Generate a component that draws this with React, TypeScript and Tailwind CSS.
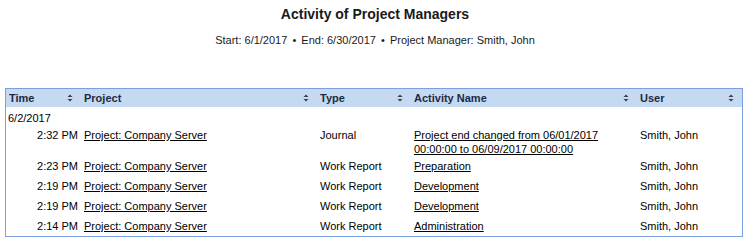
import type { ReactNode } from 'react';

interface Activity {
  time: string;
  project: string;
  type: string;
  activity: ReactNode;
  user: string;
}

const rows: Activity[] = [
  {
    time: '2:32 PM',
    project: 'Project: Company Server',
    type: 'Journal',
    activity: (
      <>
        Project end changed from 06/01/2017
        <br />
        00:00:00 to 06/09/2017 00:00:00
      </>
    ),
    user: 'Smith, John',
  },
  { time: '2:23 PM', project: 'Project: Company Server', type: 'Work Report', activity: 'Preparation', user: 'Smith, John' },
  { time: '2:19 PM', project: 'Project: Company Server', type: 'Work Report', activity: 'Development', user: 'Smith, John' },
  { time: '2:19 PM', project: 'Project: Company Server', type: 'Work Report', activity: 'Development', user: 'Smith, John' },
  { time: '2:14 PM', project: 'Project: Company Server', type: 'Work Report', activity: 'Administration', user: 'Smith, John' },
];

const SortIcon = () => (
  <svg width="6" height="8" viewBox="0 0 6 8" className="shrink-0">
    <path d="M3 0.5 L5.5 3 L0.5 3 Z" fill="#3a3f4a" />
    <path d="M0.5 5 L5.5 5 L3 7.5 Z" fill="#3a3f4a" />
  </svg>
);

const HeaderCell = ({ label, width }: { label: string; width: string }) => (
  <th className={`${width} p-0 text-left font-bold`}>
    <div className="flex h-[18px] items-center justify-between pl-[3px] pr-[8px]">
      <span>{label}</span>
      <SortIcon />
    </div>
  </th>
);

export default function App() {
  return (
    <div className="h-[248px] w-[750px] bg-white text-[11px] leading-[14px] text-black" style={{ fontFamily: '"Liberation Sans", Arial, sans-serif' }}>
      <h1 className="pt-[5px] text-center text-[14px] font-bold leading-[18px] text-[#1a1a1a]">Activity of Project Managers</h1>
      <p className="mt-[10px] text-center text-[11px] leading-[14px] text-[#1a1a1a]">
        Start: 6/1/2017 <span className="mx-[2px]">•</span> End: 6/30/2017 <span className="mx-[2px]">•</span> Project Manager: Smith, John
      </p>

      <div className="ml-[5px] mt-[41px] w-[738px] border border-[#7ba0e2]">
        <table className="w-full table-fixed border-collapse">
          <thead>
            <tr className="bg-[#c5d9f1] text-[#1c2b45]">
              <HeaderCell label="Time" width="w-[75px]" />
              <HeaderCell label="Project" width="w-[236px]" />
              <HeaderCell label="Type" width="w-[94px]" />
              <HeaderCell label="Activity Name" width="w-[226px]" />
              <HeaderCell label="User" width="w-[105px]" />
            </tr>
          </thead>
          <tbody>
            <tr>
              <td colSpan={5} className="px-[2px] pb-0 pt-[4px]">
                6/2/2017
              </td>
            </tr>
            {rows.map((row, i) => {
              const pad = i === 0 ? 'pt-[3px] pb-0' : 'pt-[3px] pb-[3px]';
              return (
                <tr key={i} className="align-top">
                  <td className={`${pad} pr-[3px] text-right`}>{row.time}</td>
                  <td className={`${pad} pl-[3px]`}>
                    <a href="#" className="underline">
                      {row.project}
                    </a>
                  </td>
                  <td className={`${pad} pl-[3px]`}>{row.type}</td>
                  <td className={`${pad} pl-[3px]`}>
                    <a href="#" className="underline">
                      {row.activity}
                    </a>
                  </td>
                  <td className={`${pad} pl-[3px]`}>{row.user}</td>
                </tr>
              );
            })}
          </tbody>
        </table>
      </div>
    </div>
  );
}
